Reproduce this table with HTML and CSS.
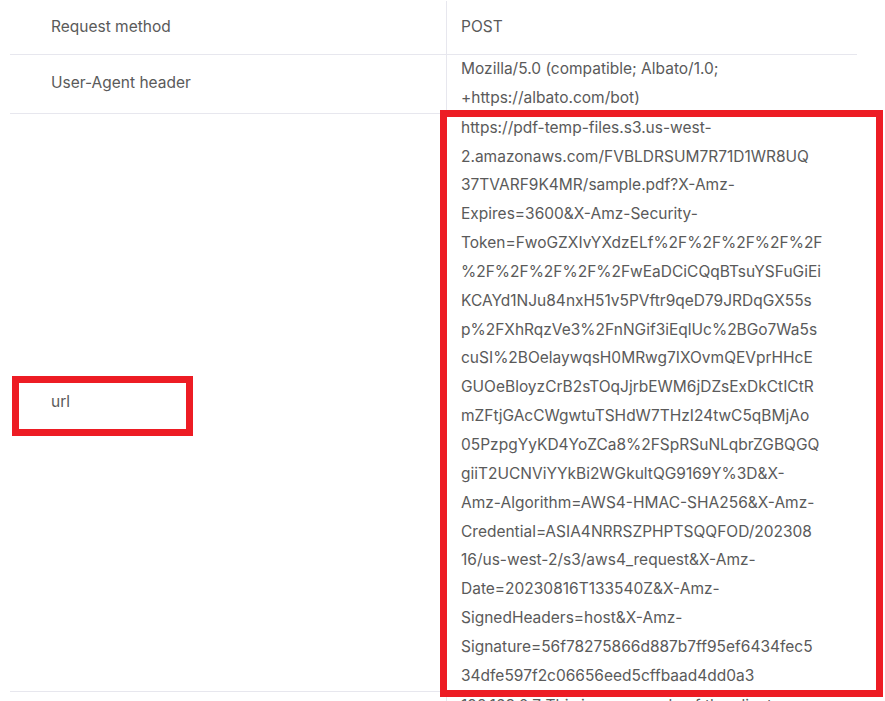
FILE: index.html
```html
<!DOCTYPE html>
<html lang="en">
<head>
<meta charset="utf-8">
<title>Request details</title>
<link rel="stylesheet" href="styles.css">
</head>
<body>
<div class="page">
  <div class="table">
    <div class="row row-single">
      <div class="label">Request method</div>
      <div class="value">POST</div>
    </div>
    <div class="row">
      <div class="label">User-Agent header</div>
      <div class="value">Mozilla/5.0 (compatible; Albato/1.0; +https://albato.com/bot)</div>
    </div>
    <div class="row">
      <div class="label">url</div>
      <div class="value url"><span class="ln">https://pdf-temp-files.s3.us-west-</span><span class="ln">2.amazonaws.com/FVBLDRSUM7R71D1WR8UQ</span><span class="ln">37TVARF9K4MR/sample.pdf?X-Amz-</span><span class="ln">Expires=3600&amp;X-Amz-Security-</span><span class="ln">Token=FwoGZXIvYXdzELf%2F%2F%2F%2F%2F</span><span class="ln">%2F%2F%2F%2F%2FwEaDCiCQqBTsuYSFuGiEi</span><span class="ln">KCAYd1NJu84nxH51v5PVftr9qeD79JRDqGX55s</span><span class="ln">p%2FXhRqzVe3%2FnNGif3iEqlUc%2BGo7Wa5s</span><span class="ln">cuSI%2BOelaywqsH0MRwg7IXOvmQEVprHHcE</span><span class="ln">GUOeBloyzCrB2sTOqJjrbEWM6jDZsExDkCtICtR</span><span class="ln">mZFtjGAcCWgwtuTSHdW7THzI24twC5qBMjAo</span><span class="ln">05PzpgYyKD4YoZCa8%2FSpRSuNLqbrZGBQGQ</span><span class="ln">giiT2UCNViYYkBi2WGkultQG9169Y%3D&amp;X-</span><span class="ln">Amz-Algorithm=AWS4-HMAC-SHA256&amp;X-Amz-</span><span class="ln">Credential=ASIA4NRRSZPHPTSQQFOD/202308</span><span class="ln">16/us-west-2/s3/aws4_request&amp;X-Amz-</span><span class="ln">Date=20230816T133540Z&amp;X-Amz-</span><span class="ln">SignedHeaders=host&amp;X-Amz-</span><span class="ln">Signature=56f78275866d887b7ff95ef6434fec5</span><span class="ln">34dfe597f2c06656eed5cffbaad4dd0a3</span></div>
    </div>
    <div class="row">
      <div class="label">Client IP</div>
      <div class="value">192.168.0.7 This is an example of the client address that was sent with the request to the server</div>
    </div>
  </div>
  <div class="mark mark-label"></div>
  <div class="mark mark-value"></div>
</div>
</body>
</html>
```

FILE: styles.css
```css
html, body {
  margin: 0;
  padding: 0;
  background: #ffffff;
}

body {
  width: 885px;
  height: 701px;
  overflow: hidden;
  font-family: Inter, "Noto Sans", "Liberation Sans", sans-serif;
  font-size: 15.5px;
  color: #5a5a5a;
}

.page {
  position: relative;
  height: 701px;
  overflow: hidden;
}

.table {
  margin-left: 10px;
  width: 847px;
  display: flex;
  flex-direction: column;
}

.row {
  display: grid;
  grid-template-columns: 436px 411px;
  border-bottom: 1px solid #e7e7ee;
  line-height: 28.85px;
}

.row-single {
  min-height: 53px;
  padding-top: 1px;
}

.label {
  padding-left: 41px;
  display: flex;
  align-items: center;
}

.value {
  border-left: 1px solid #e7e7ee;
  padding: 0 34px 0 14px;
  display: flex;
  align-items: center;
  overflow-wrap: anywhere;
}

.url {
  display: block;
}

.ln {
  display: block;
  white-space: nowrap;
}

.mark {
  position: absolute;
  border: 7px solid #ed1c24;
  box-sizing: border-box;
}

.mark-label {
  left: 12px;
  top: 376px;
  width: 181px;
  height: 60px;
}

.mark-value {
  left: 440px;
  top: 110px;
  width: 443px;
  height: 587px;
}
```
